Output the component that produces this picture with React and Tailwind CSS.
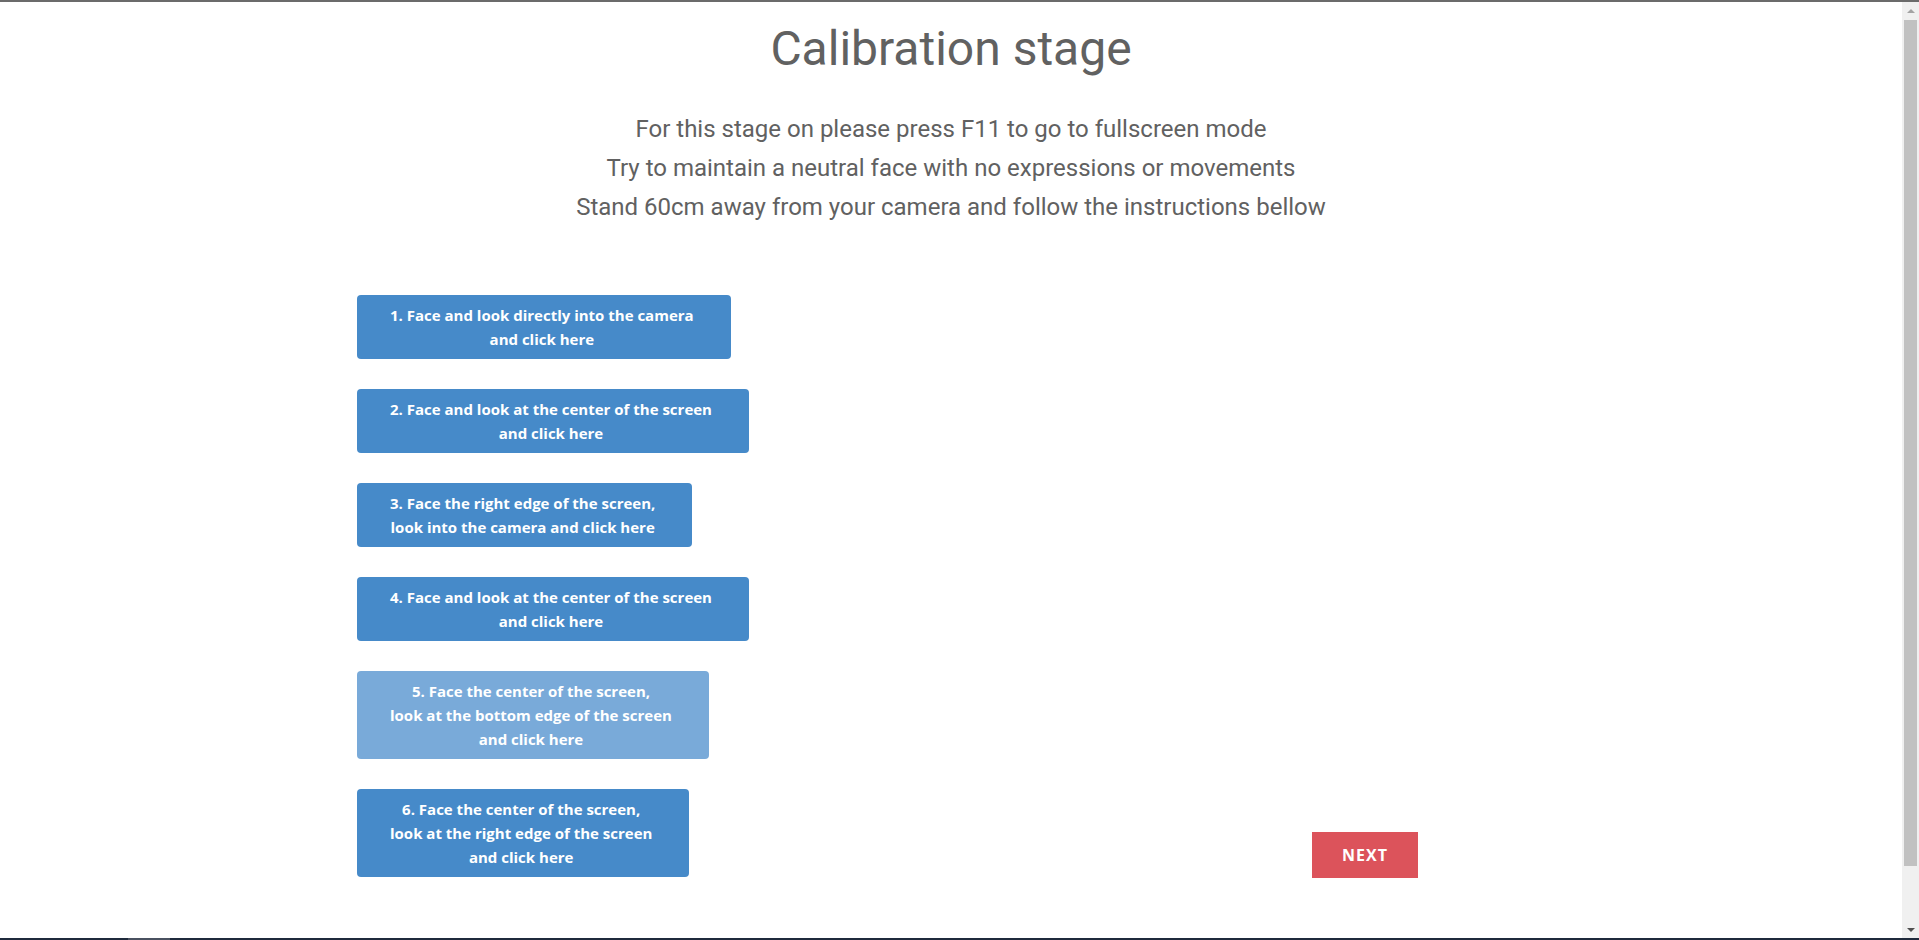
import React from 'react';

const steps = [
  { lines: ['1. Face and look directly into the camera', 'and click here'] },
  { lines: ['2. Face and look at the center of the screen', 'and click here'] },
  { lines: ['3. Face the right edge of the screen,', 'look into the camera and click here'] },
  { lines: ['4. Face and look at the center of the screen', 'and click here'] },
  { lines: ['5. Face the center of the screen,', 'look at the bottom edge of the screen', 'and click here'], faded: true },
  { lines: ['6. Face the center of the screen,', 'look at the right edge of the screen', 'and click here'] },
];

function StepButton({ lines, faded }) {
  return (
    <button
      className={
        'block rounded-[4px] py-2 pl-[33px] pr-[37px] text-center text-[15px] leading-[24px] font-bold text-white ' +
        (faded ? 'bg-[#79aad9]' : 'bg-[#468ac9]')
      }
    >
      {lines.map((l, i) => (
        <span key={i} className="block whitespace-nowrap">{l}</span>
      ))}
    </button>
  );
}

function Scrollbar() {
  return (
    <div className="w-[17px] bg-[#f0f0f0] flex flex-col items-center">
      <div className="h-[18px] flex items-center justify-center">
        <div className="w-0 h-0 border-l-[4px] border-r-[4px] border-b-[4px] border-l-transparent border-r-transparent border-b-[#a3a3a3]" />
      </div>
      <div className="w-[13px] h-[846px] bg-[#c1c1c1]" />
      <div className="flex-1 flex items-end justify-center pb-[6px]">
        <div className="w-0 h-0 border-l-[4px] border-r-[4px] border-t-[4px] border-l-transparent border-r-transparent border-t-[#505050]" />
      </div>
    </div>
  );
}

export default function App() {
  return (
    <div className="h-[940px] w-full flex flex-col bg-white overflow-hidden">
      <div className="h-[2px] bg-[#6b6b6b]" />
      <div className="flex-1 flex min-h-0">
        <main className="flex-1 pt-[19px] font-['Roboto',sans-serif] text-[#616161]">
          <h1 className="text-center text-[48px] leading-[55px] font-normal">Calibration stage</h1>
          <div className="mt-[34px] text-center text-[24px] leading-[39px]">
            <p>For this stage on please press F11 to go to fullscreen mode</p>
            <p>Try to maintain a neutral face with no expressions or movements</p>
            <p>Stand 60cm away from your camera and follow the instructions bellow</p>
          </div>
          <div className="mt-[68px] pl-[357px] flex items-end font-['Open_Sans',sans-serif]">
            <div className="w-[955px] flex flex-col gap-[30px] items-start">
              {steps.map((s, i) => (
                <StepButton key={i} lines={s.lines} faded={s.faded} />
              ))}
            </div>
            <button className="mb-[-1px] w-[106px] h-[46px] bg-[#dc535b] text-white text-[16px] font-bold tracking-[1px]">
              NEXT
            </button>
          </div>
        </main>
        <Scrollbar />
      </div>
      <div className="h-[2px] flex bg-[#1f2a3c]">
        <div className="ml-[128px] w-[42px] bg-[#4a5160]" />
      </div>
    </div>
  );
}
